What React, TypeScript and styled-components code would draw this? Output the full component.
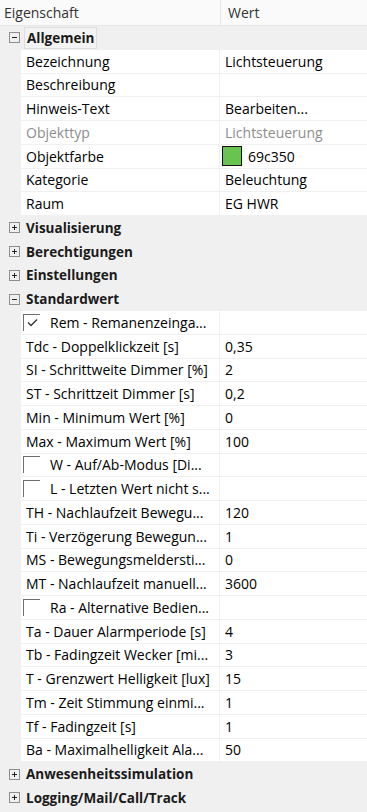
import React from "react";
import styled, { createGlobalStyle } from "styled-components";

const Global = createGlobalStyle`
  html, body { margin: 0; padding: 0; background: #f0f0f0; }
  body { font-family: "Segoe UI", "Open Sans", "Noto Sans", sans-serif; }
`;

const ROW_H = 23.75;

const Grid = styled.div`
  width: 367px;
  height: 812px;
  overflow: hidden;
  background: #f0f0f0;
  font-size: 14px;
  color: #000;
`;

const Header = styled.div`
  display: grid;
  grid-template-columns: 221px 1fr;
  height: 26px;
  background: #fafafa;
  border-bottom: 1px solid #e6e6e6;
  box-sizing: border-box;
`;

const HeaderCell = styled.div<{ $first?: boolean }>`
  display: flex;
  align-items: center;
  padding-left: ${(p) => (p.$first ? "4px" : "7px")};
  color: #333;
  border-right: ${(p) => (p.$first ? "1px solid #e6e6e6" : "none")};
`;

const GroupRow = styled.div`
  display: flex;
  align-items: center;
  height: ${ROW_H}px;
  box-sizing: border-box;
`;

const Expander = styled.span`
  width: 11px;
  height: 11px;
  box-sizing: border-box;
  border: 1px solid #8e8e8e;
  margin-left: 9px;
  margin-right: 4px;
  position: relative;
  flex: none;
  &::before {
    content: "";
    position: absolute;
    left: 2px;
    right: 2px;
    top: 4px;
    height: 1px;
    background: #222;
  }
`;

const ExpanderPlus = styled(Expander)`
  &::after {
    content: "";
    position: absolute;
    top: 2px;
    bottom: 2px;
    left: 4px;
    width: 1px;
    background: #222;
  }
`;

const GroupLabel = styled.span<{ $focus?: boolean }>`
  font-weight: 700;
  font-size: 13.5px;
  color: #1a1a1a;
  padding: 1px 2px;
  margin-left: ${(p) => (p.$focus ? "0px" : "-1px")};
  border: 1px solid ${(p) => (p.$focus ? "#dedede" : "transparent")};
  background: ${(p) => (p.$focus ? "#f3f3f3" : "transparent")};
`;

const ItemRow = styled.div`
  display: grid;
  grid-template-columns: 198px 1fr;
  column-gap: 1px;
  height: ${ROW_H}px;
  padding-left: 21px;
  padding-bottom: 1px;
  box-sizing: border-box;
`;

const Cell = styled.div<{ $disabled?: boolean }>`
  background: #fff;
  display: flex;
  align-items: center;
  padding-left: 5px;
  white-space: nowrap;
  overflow: hidden;
  color: ${(p) => (p.$disabled ? "#8d8d8d" : "#000")};
`;

const ValueCell = styled(Cell)`
  padding-left: 5px;
`;

const Check = styled.span`
  width: 17px;
  height: 17px;
  box-sizing: border-box;
  border-top: 1px solid #6e6e6e;
  border-left: 1px solid #6e6e6e;
  margin-left: -3px;
  margin-right: 10px;
  flex: none;
  display: flex;
  align-items: center;
  justify-content: center;
`;

const Swatch = styled.span<{ $color: string }>`
  width: 20px;
  height: 20px;
  box-sizing: border-box;
  border: 1px solid #111;
  background: ${(p) => p.$color};
  margin-left: -3px;
  margin-right: 6px;
  flex: none;
`;

type Item = {
  label: string;
  value?: string;
  disabled?: boolean;
  check?: "on" | "off";
  color?: string;
};

type Group = { name: string; open: boolean; focus?: boolean; items?: Item[] };

const groups: Group[] = [
  {
    name: "Allgemein",
    open: true,
    focus: true,
    items: [
      { label: "Bezeichnung", value: "Lichtsteuerung" },
      { label: "Beschreibung", value: "" },
      { label: "Hinweis-Text", value: "Bearbeiten..." },
      { label: "Objekttyp", value: "Lichtsteuerung", disabled: true },
      { label: "Objektfarbe", value: "69c350", color: "#69c350" },
      { label: "Kategorie", value: "Beleuchtung" },
      { label: "Raum", value: "EG HWR" },
    ],
  },
  { name: "Visualisierung", open: false },
  { name: "Berechtigungen", open: false },
  { name: "Einstellungen", open: false },
  {
    name: "Standardwert",
    open: true,
    items: [
      { label: "Rem - Remanenzeinga...", check: "on" },
      { label: "Tdc - Doppelklickzeit [s]", value: "0,35" },
      { label: "SI - Schrittweite Dimmer [%]", value: "2" },
      { label: "ST - Schrittzeit Dimmer [s]", value: "0,2" },
      { label: "Min - Minimum Wert [%]", value: "0" },
      { label: "Max - Maximum Wert [%]", value: "100" },
      { label: "W - Auf/Ab-Modus [Di...", check: "off" },
      { label: "L - Letzten Wert nicht s...", check: "off" },
      { label: "TH - Nachlaufzeit Bewegu...", value: "120" },
      { label: "Ti - Verzögerung Bewegun...", value: "1" },
      { label: "MS - Bewegungsmeldersti...", value: "0" },
      { label: "MT - Nachlaufzeit manuell...", value: "3600" },
      { label: "Ra - Alternative Bedien...", check: "off" },
      { label: "Ta - Dauer Alarmperiode [s]", value: "4" },
      { label: "Tb - Fadingzeit Wecker [mi...", value: "3" },
      { label: "T - Grenzwert Helligkeit [lux]", value: "15" },
      { label: "Tm - Zeit Stimmung einmi...", value: "1" },
      { label: "Tf - Fadingzeit [s]", value: "1" },
      { label: "Ba - Maximalhelligkeit Ala...", value: "50" },
    ],
  },
  { name: "Anwesenheitssimulation", open: false },
  { name: "Logging/Mail/Call/Track", open: false },
];

const Tick = () => (
  <svg width="11" height="9" viewBox="0 0 11 9">
    <path d="M1 4.5 L4 7.5 L10 1.5" fill="none" stroke="#333" strokeWidth="1.3" />
  </svg>
);

export default function App() {
  return (
    <>
      <Global />
      <Grid>
        <Header>
          <HeaderCell $first>Eigenschaft</HeaderCell>
          <HeaderCell>Wert</HeaderCell>
        </Header>
        {groups.map((g) => (
          <React.Fragment key={g.name}>
            <GroupRow>
              {g.open ? <Expander /> : <ExpanderPlus />}
              <GroupLabel $focus={g.focus}>{g.name}</GroupLabel>
            </GroupRow>
            {g.open &&
              g.items?.map((it) => (
                <ItemRow key={it.label}>
                  <Cell $disabled={it.disabled}>
                    {it.check && <Check>{it.check === "on" && <Tick />}</Check>}
                    {it.label}
                  </Cell>
                  <ValueCell $disabled={it.disabled}>
                    {it.color && <Swatch $color={it.color} />}
                    {it.value}
                  </ValueCell>
                </ItemRow>
              ))}
          </React.Fragment>
        ))}
      </Grid>
    </>
  );
}
